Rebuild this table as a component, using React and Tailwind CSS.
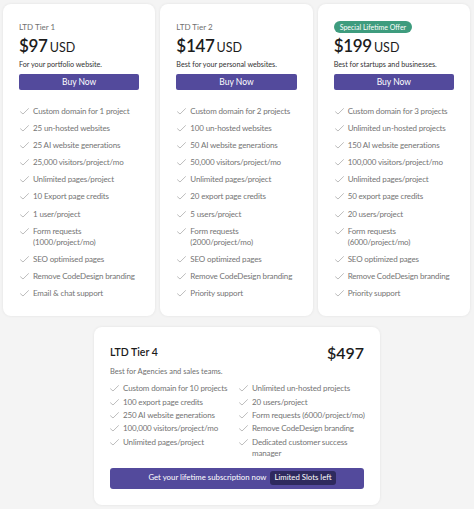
import React from "react";

function Check() {
  return (
    <svg width="9" height="7" viewBox="0 0 9 7" className="shrink-0 mt-[2px]" fill="none">
      <polyline points="0.5,3.8 3,6 8.5,0.6" stroke="#b5b5b5" strokeWidth="0.9" strokeLinecap="round" strokeLinejoin="round" />
    </svg>
  );
}

function Feature({ children }) {
  return (
    <li className="flex items-start gap-[4px] text-[8px] tracking-[-0.15px] leading-[11px] text-[#747474] whitespace-nowrap">
      <Check />
      <span>{children}</span>
    </li>
  );
}

const tiers = [
  {
    label: "LTD Tier 1",
    price: "$97",
    desc: "For your portfolio website.",
    features: [
      "Custom domain for 1 project",
      "25 un-hosted websites",
      "25 AI website generations",
      "25,000 visitors/project/mo",
      "Unlimited pages/project",
      "10 Export page credits",
      "1 user/project",
      ["Form requests", "(1000/project/mo)"],
      "SEO optimised pages",
      "Remove CodeDesign branding",
      "Email & chat support",
    ],
  },
  {
    label: "LTD Tier 2",
    price: "$147",
    desc: "Best for your personal websites.",
    features: [
      "Custom domain for 2 projects",
      "100 un-hosted websites",
      "50 AI website generations",
      "50,000 visitors/project/mo",
      "Unlimited pages/project",
      "20 export page credits",
      "5 users/project",
      ["Form requests", "(2000/project/mo)"],
      "SEO optimized pages",
      "Remove CodeDesign branding",
      "Priority support",
    ],
  },
  {
    badge: "Special Lifetime Offer",
    price: "$199",
    desc: "Best for startups and businesses.",
    features: [
      "Custom domain for 3 projects",
      "Unlimited un-hosted projects",
      "150 AI website generations",
      "100,000 visitors/project/mo",
      "Unlimited pages/project",
      "50 export page credits",
      "20 users/project",
      ["Form requests", "(6000/project/mo)"],
      "SEO optimized pages",
      "Remove CodeDesign branding",
      "Priority support",
    ],
  },
];

function Card({ t }) {
  return (
    <div className="bg-white rounded-[8px] shadow-[0_0_3px_rgba(0,0,0,0.08)] px-[16px] pt-[16px] h-[312px]">
      <div className="h-[14px] flex items-center">
        {t.badge ? (
          <span className="bg-[#3e9c7e] text-white rounded-full px-[6px] h-[12px] flex items-center text-[7px] leading-none">
            {t.badge}
          </span>
        ) : (
          <span className="text-[8px] text-[#707070]">{t.label}</span>
        )}
      </div>
      <div className="mt-[3px] h-[18px] flex items-baseline leading-[18px] text-[#1c1c1c]">
        <span className="text-[17px] font-semibold tracking-[-0.3px]">{t.price}</span>
        <span className="text-[12.5px] ml-[2px]">USD</span>
      </div>
      <div className="mt-[5px] text-[7.2px] leading-[10px] text-[#333]">{t.desc}</div>
      <button className="mt-[4px] w-full h-[16px] rounded-[2px] bg-[#534a9c] text-white text-[8.5px] leading-none flex items-center justify-center">
        Buy Now
      </button>
      <ul className="mt-[16px] flex flex-col gap-[6.1px] pl-[1px]">
        {t.features.map((f, i) => (
          <Feature key={i}>
            {Array.isArray(f) ? (
              <>
                {f[0]}
                <br />
                {f[1]}
              </>
            ) : (
              f
            )}
          </Feature>
        ))}
      </ul>
    </div>
  );
}

export default function App() {
  return (
    <div className="w-[474px] h-[509px] bg-[#f4f4f4] pt-[4px] px-[3px] font-['Lato',sans-serif] overflow-hidden">
      <div className="grid grid-cols-3 gap-[5px] w-[467px]">
        {tiers.map((t, i) => (
          <Card key={i} t={t} />
        ))}
      </div>
      <div className="mt-[11px] ml-[91px] w-[286px] h-[178px] bg-white rounded-[8px] shadow-[0_0_3px_rgba(0,0,0,0.08)] px-[16px] pt-[17px]">
        <div className="flex items-center justify-between h-[18px]">
          <span className="text-[10.5px] font-semibold text-[#1c1c1c]">LTD Tier 4</span>
          <span className="text-[16px] font-semibold text-[#1c1c1c]">$497</span>
        </div>
        <div className="mt-[4px] text-[7.5px] text-[#707070]">Best for Agencies and sales teams.</div>
        <div className="mt-[6px] grid grid-cols-[129px_1fr]">
          <ul className="flex flex-col gap-[2.4px]">
            <Feature>Custom domain for 10 projects</Feature>
            <Feature>100 export page credits</Feature>
            <Feature>250 AI website generations</Feature>
            <Feature>100,000 visitors/project/mo</Feature>
            <Feature>Unlimited pages/project</Feature>
          </ul>
          <ul className="flex flex-col gap-[2.4px]">
            <Feature>Unlimited un-hosted projects</Feature>
            <Feature>20 users/project</Feature>
            <Feature>Form requests (6000/project/mo)</Feature>
            <Feature>Remove CodeDesign branding</Feature>
            <Feature>
              Dedicated customer success
              <br />
              manager
            </Feature>
          </ul>
        </div>
        <button className="mt-[9px] w-full h-[21px] rounded-[3px] bg-[#534a9c] text-white text-[7.8px] flex items-center justify-center gap-[4px] pl-[10px]">
          <span>Get your lifetime subscription now</span>
          <span className="bg-[#2e2a5e] rounded-[3px] px-[4px] h-[14px] flex items-center">Limited Slots left</span>
        </button>
      </div>
    </div>
  );
}
